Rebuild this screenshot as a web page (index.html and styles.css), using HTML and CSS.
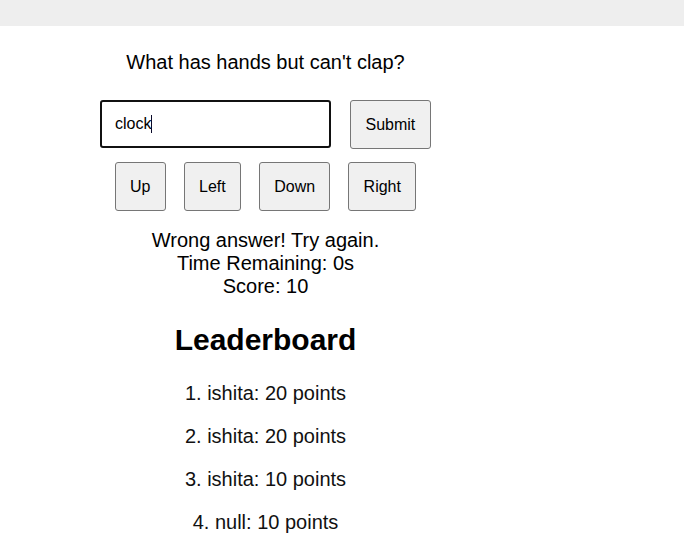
FILE: index.html
```html
<!DOCTYPE html>
<html>
<head>
<meta charset="utf-8">
<link rel="stylesheet" href="styles.css">
</head>
<body>
<div class="topbar"></div>
<main class="game">
  <p class="question">What has hands but can't clap?</p>
  <div class="answer-row">
    <div class="answer-input">clock<span class="caret"></span></div>
    <button class="btn btn-submit">Submit</button>
  </div>
  <div class="dir-row">
    <button class="btn btn-dir">Up</button>
    <button class="btn btn-dir">Left</button>
    <button class="btn btn-dir">Down</button>
    <button class="btn btn-dir">Right</button>
  </div>
  <div class="status">
    <div>Wrong answer! Try again.</div>
    <div>Time Remaining: 0s</div>
    <div>Score: 10</div>
  </div>
  <h2 class="board-title">Leaderboard</h2>
  <ol class="board">
    <li>1. ishita: 20 points</li>
    <li>2. ishita: 20 points</li>
    <li>3. ishita: 10 points</li>
    <li>4. null: 10 points</li>
  </ol>
</main>
</body>
</html>
```
FILE: styles.css
```css
html, body {
  margin: 0;
  padding: 0;
  background: #ffffff;
  font-family: "Liberation Sans", Arial, sans-serif;
  color: #000;
}
.topbar {
  height: 26px;
  background: #eeeeee;
}
.game {
  width: 331px;
  margin-left: 100px;
  display: flex;
  flex-direction: column;
  align-items: center;
}
.question {
  margin: 25px 0 0;
  font-size: 20px;
  line-height: 23px;
}
.answer-row {
  margin-top: 26px;
  display: flex;
  align-items: flex-start;
  gap: 19px;
  align-self: stretch;
}
.answer-input {
  box-sizing: border-box;
  width: 231px;
  height: 48px;
  border: 2px solid #111;
  border-radius: 3px;
  padding: 0 13px;
  display: flex;
  align-items: center;
  font-size: 16px;
  color: #000;
}
.caret {
  display: inline-block;
  width: 1px;
  height: 18px;
  background: #0a0a2a;
}
.btn {
  box-sizing: border-box;
  height: 49px;
  padding: 0 14.5px;
  background: #f0f0f0;
  border: 1px solid #767676;
  border-radius: 3px;
  font-family: "Liberation Sans", Arial, sans-serif;
  font-size: 16px;
  color: #000;
  margin: 0;
}
.btn-dir {
  padding: 0 14.25px;
}
.dir-row {
  margin-top: 13px;
  display: flex;
  gap: 18px;
}
.status {
  margin-top: 18px;
  font-size: 20px;
  line-height: 23px;
  text-align: center;
}
.board-title {
  margin: 24px 0 0;
  font-size: 30px;
  line-height: 35px;
  font-weight: bold;
}
.board {
  list-style: none;
  margin: 15px 0 0;
  padding: 0;
  text-align: center;
  font-size: 20px;
  line-height: 23px;
  color: #111;
}
.board li {
  padding: 10px 0;
}
```
